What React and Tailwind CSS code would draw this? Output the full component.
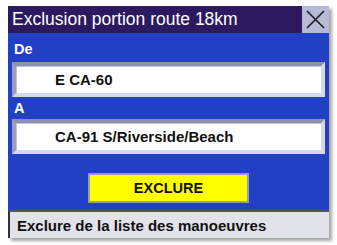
export default function App() {
  const font = { fontFamily: "'Liberation Sans', Arial, sans-serif" };

  const Field = ({ value }) => (
    <div className="mx-[4px] h-[35px] border-[4px] border-t-[#8e90ac] border-l-[#9a9cc0] border-r-[#d6d8ee] border-b-[#d6d8ee] bg-white flex items-center pl-[39px] shadow-[inset_1px_1px_0_#c0c2dc]">
      <span className="text-[15px] font-bold text-[#111] leading-none">{value}</span>
    </div>
  );

  return (
    <div className="w-[337px] h-[245px] bg-white pl-[8px] pt-[6px]" style={font}>
      <div className="w-[321px] flex flex-col shadow-[3px_3px_3px_rgba(0,0,0,0.35)]">
        {/* Title bar */}
        <div className="h-[27px] flex bg-[#2b1a60]">
          <div className="flex-1 flex items-center pl-[4px] text-white text-[17.5px] leading-none">
            Exclusion portion route 18km
          </div>
          <div className="w-[27px] h-[27px] bg-[#b7bad6] flex items-center justify-center">
            <svg width="21" height="21" viewBox="0 0 21 21">
              <path d="M2 2 L19 19 M19 2 L2 19" stroke="#1a1a1a" strokeWidth="1.6" fill="none" />
            </svg>
          </div>
        </div>

        {/* Body */}
        <div className="bg-[#2240c4] flex flex-col">
          <div className="h-[29px] flex items-end pb-[6px] pl-[6px] text-white font-bold text-[14.5px] leading-none">De</div>
          <Field value="E CA-60" />
          <div className="h-[22px] flex items-end pb-[4px] pl-[6px] text-white font-bold text-[14.5px] leading-none">A</div>
          <Field value="CA-91 S/Riverside/Beach" />
          <div className="flex justify-center pt-[19px] pb-[7px]">
            <div className="w-[161px] h-[30px] bg-[#ffff00] border-[2px] border-[#9c9cb4] flex items-center justify-center text-[14.5px] font-bold text-[#111] leading-none">
              EXCLURE
            </div>
          </div>
        </div>

        {/* Status bar */}
        <div className="h-[28px] bg-[#e2e2ea] border-l-[2px] border-t-[2px] border-l-[#333] border-t-[#555] flex items-center pl-[7px] text-[15px] font-bold text-[#111] leading-none">
          Exclure de la liste des manoeuvres
        </div>
      </div>
    </div>
  );
}
